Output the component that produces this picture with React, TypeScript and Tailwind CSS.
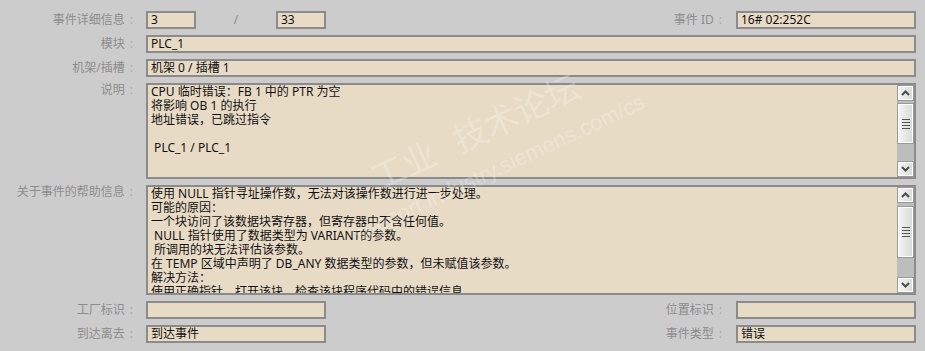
import React from "react";

const FONT = { fontFamily: '"Noto Sans", "Noto Sans CJK SC", sans-serif' };

function Label({ text, className = "" }: { text: string; className?: string }) {
  return (
    <div className={"flex justify-end items-start text-[12px] leading-[18px] text-[#8c8c8c] whitespace-nowrap " + className}>
      <span>{text}</span>
      <span className="ml-[5px] text-[#a8a8a8]">:</span>
    </div>
  );
}

function Field({ value = "", className = "" }: { value?: string; className?: string }) {
  return (
    <div
      className={
        "h-[18px] border-2 border-[#8b8b8b] bg-[#e8dbc5] text-[12px] leading-[14px] text-[#111] px-[3px] whitespace-nowrap overflow-hidden " +
        className
      }
    >
      {value}
    </div>
  );
}

function Chevron({ up }: { up: boolean }) {
  return (
    <svg width="9" height="6" viewBox="0 0 9 6" className="block">
      <path
        d={up ? "M1 5 L4.5 1.5 L8 5" : "M1 1 L4.5 4.5 L8 1"}
        stroke="#4a4a4a"
        strokeWidth="2"
        fill="none"
      />
    </svg>
  );
}

function Btn({ children, className = "" }: { children?: React.ReactNode; className?: string }) {
  return (
    <div
      className={
        "border border-[#9a9a9a] bg-gradient-to-r from-[#f6f6f6] to-[#d9d9d9] shadow-[inset_0_0_0_1px_#ffffff] flex items-center justify-center " +
        className
      }
    >
      {children}
    </div>
  );
}

function ScrollBar({ gap, thumb }: { gap: number; thumb: number }) {
  return (
    <div className="w-[17px] h-full bg-[#bdbdbd] flex flex-col shrink-0">
      <Btn className="h-[16px]">
        <Chevron up />
      </Btn>
      <div style={{ height: gap }} />
      <Btn className="shrink-0">
        <div style={{ height: thumb - 2 }} className="flex flex-col items-center justify-center gap-[2px]">
          <div className="w-[8px] h-[1px] bg-[#555]" />
          <div className="w-[8px] h-[1px] bg-[#555]" />
          <div className="w-[8px] h-[1px] bg-[#555]" />
          <div className="w-[8px] h-[1px] bg-[#555]" />
        </div>
      </Btn>
      <div className="flex-1" />
      <Btn className="h-[16px]">
        <Chevron up={false} />
      </Btn>
    </div>
  );
}

function TextBox({
  lines,
  height,
  gap,
  thumb,
}: {
  lines: string[];
  height: number;
  gap: number;
  thumb: number;
}) {
  return (
    <div
      className="flex-1 border-2 border-[#8b8b8b] bg-[#e8dbc5] flex"
      style={{ height }}
    >
      <div className="flex-1 overflow-hidden px-[3px] text-[12px] leading-[14px] text-[#111] whitespace-pre">
        {lines.map((l, i) => (
          <div key={i} className="h-[14px]">
            {l}
          </div>
        ))}
      </div>
      <ScrollBar gap={gap} thumb={thumb} />
    </div>
  );
}

export default function App() {
  return (
    <div
      className="relative w-[925px] h-[351px] bg-[#cccccc] overflow-hidden pt-[11px] pr-[9px]"
      style={FONT}
    >
      <div className="flex flex-col gap-[6px]">
        {/* Row 1 */}
        <div className="flex items-start h-[18px]">
          <Label text="事件详细信息" className="w-[133px]" />
          <Field value="3" className="ml-[13px] w-[50px]" />
          <div className="w-[80px] text-center text-[12px] leading-[18px] text-[#8c8c8c]">/</div>
          <Field value="33" className="w-[50px]" />
          <div className="flex-1" />
          <Label text="事件 ID" />
          <Field value="16# 02:252C" className="ml-[14px] w-[180px]" />
        </div>
        {/* Row 2 */}
        <div className="flex items-start h-[18px]">
          <Label text="模块" className="w-[133px]" />
          <Field value="PLC_1" className="ml-[13px] flex-1" />
        </div>
        {/* Row 3 */}
        <div className="flex items-start h-[18px]">
          <Label text="机架/插槽" className="w-[133px]" />
          <Field value="机架 0 / 插槽 1" className="ml-[13px] flex-1" />
        </div>
        {/* Row 4 */}
        <div className="flex items-start">
          <Label text="说明" className="w-[133px] -mt-[2px]" />
          <div className="ml-[13px] flex-1 flex">
            <TextBox
              height={96}
              gap={2}
              thumb={41}
              lines={[
                "CPU 临时错误：FB 1 中的 PTR 为空",
                "将影响 OB 1 的执行",
                "地址错误，已跳过指令",
                "",
                " PLC_1 / PLC_1",
              ]}
            />
          </div>
        </div>
        {/* Row 5 */}
        <div className="flex items-start">
          <Label text="关于事件的帮助信息" className="w-[133px] -mt-[2px]" />
          <div className="ml-[13px] flex-1 flex">
            <TextBox
              height={110}
              gap={3}
              thumb={52}
              lines={[
                "使用 NULL 指针寻址操作数，无法对该操作数进行进一步处理。",
                "可能的原因：",
                "一个块访问了该数据块寄存器，但寄存器中不含任何值。",
                " NULL 指针使用了数据类型为 VARIANT的参数。",
                " 所调用的块无法评估该参数。",
                "在 TEMP 区域中声明了 DB_ANY 数据类型的参数，但未赋值该参数。",
                "解决方法：",
                "使用正确指针。打开该块，检查该块程序代码中的错误信息。",
              ]}
            />
          </div>
        </div>
        {/* Row 6 */}
        <div className="flex items-start h-[18px]">
          <Label text="工厂标识" className="w-[133px]" />
          <Field className="ml-[13px] w-[180px]" />
          <div className="flex-1" />
          <Label text="位置标识" />
          <Field className="ml-[14px] w-[180px]" />
        </div>
        {/* Row 7 */}
        <div className="flex items-start h-[18px]">
          <Label text="到达离去" className="w-[133px]" />
          <Field value="到达事件" className="ml-[13px] w-[180px]" />
          <div className="flex-1" />
          <Label text="事件类型" />
          <Field value="错误" className="ml-[14px] w-[180px]" />
        </div>
      </div>

      {/* watermark */}
      <div
        className="pointer-events-none absolute left-[380px] top-[195px] origin-top-left -rotate-[25deg] text-white/25 whitespace-nowrap"
        style={{ fontFamily: '"Noto Sans CJK SC", sans-serif' }}
      >
        <div className="text-[34px] leading-[36px] -translate-y-[36px]">
          工业<span className="ml-[22px]">技术论坛</span>
        </div>
        <div
          className="text-[22px] leading-[24px] -translate-y-[22px] -translate-x-[40px]"
          style={{ fontFamily: '"Liberation Sans", sans-serif' }}
        >
          support.industry.siemens.com/cs
        </div>
      </div>
    </div>
  );
}
